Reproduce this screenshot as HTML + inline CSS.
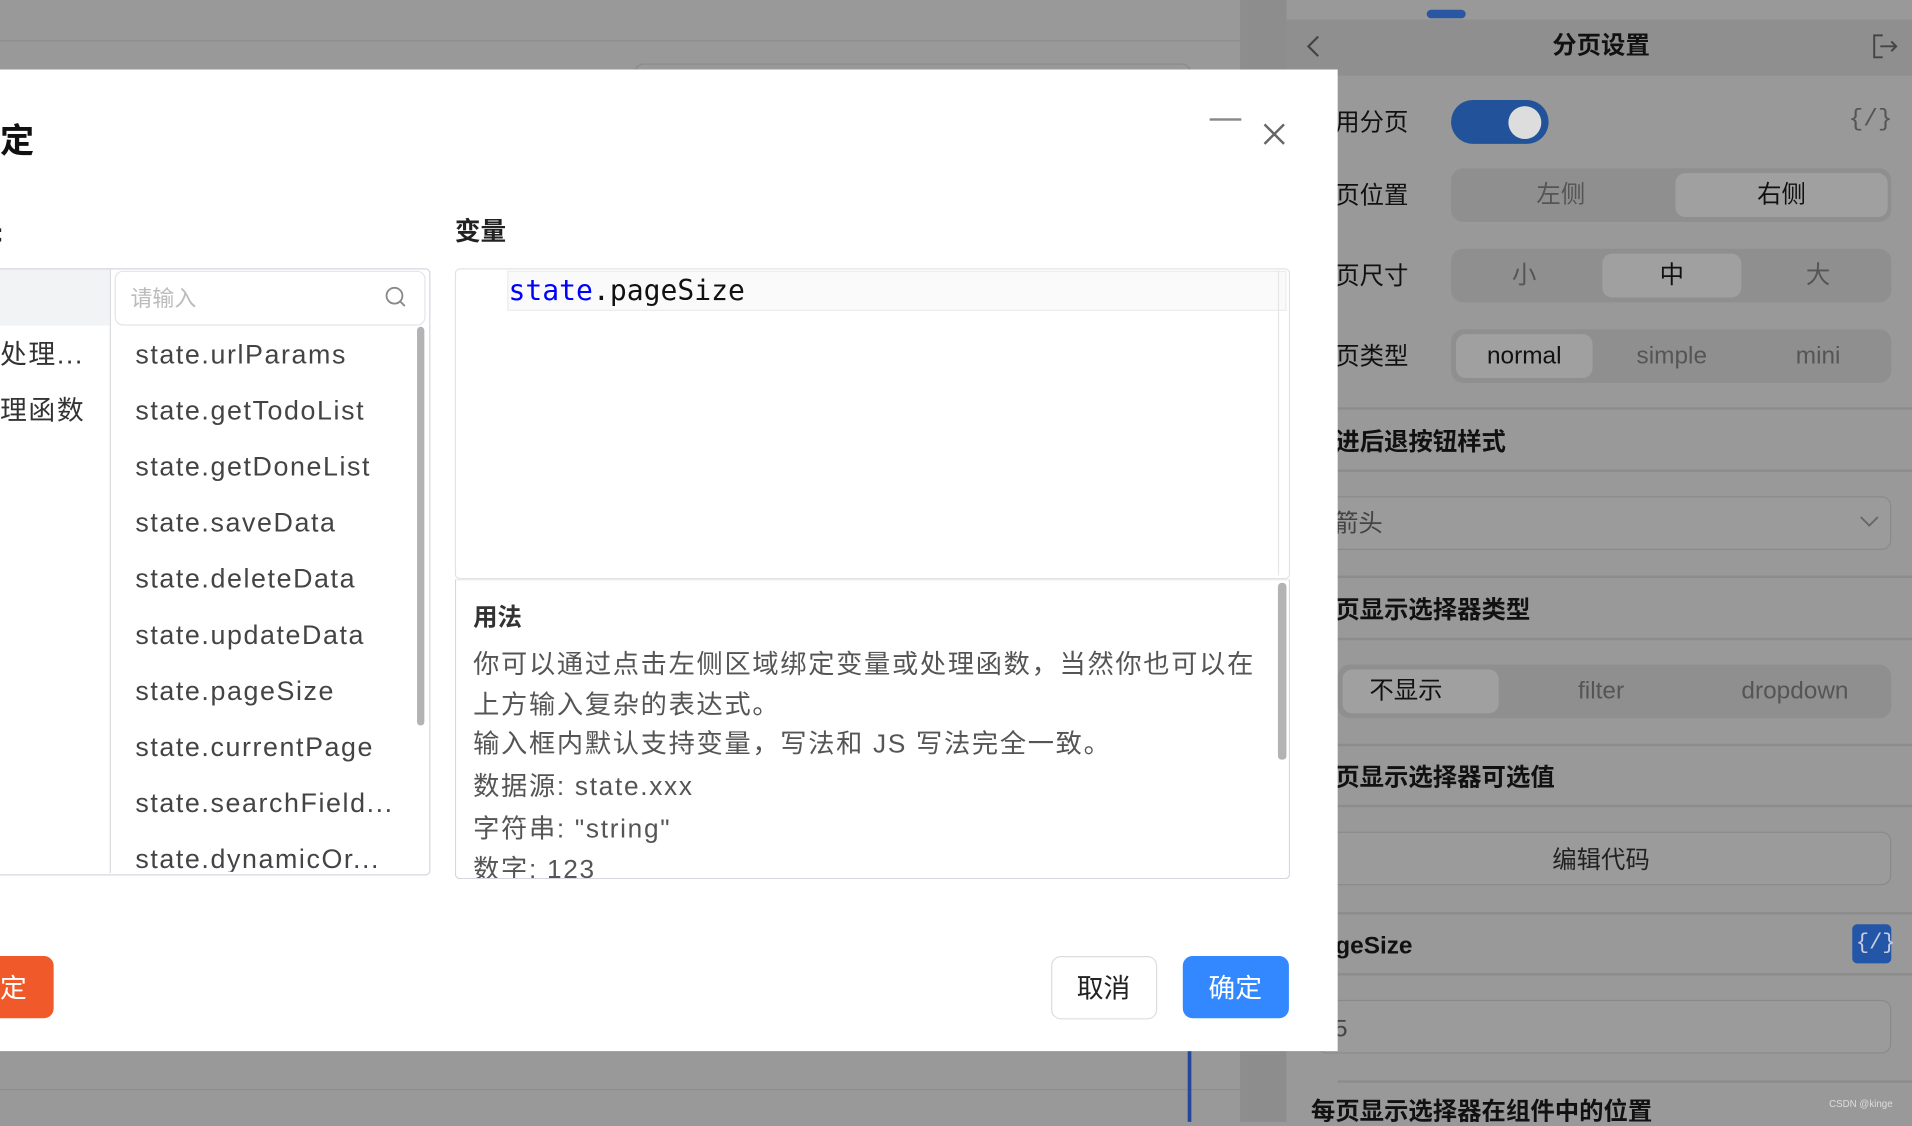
<!DOCTYPE html>
<html><head><meta charset="utf-8"><style>
html,body{margin:0;padding:0;width:1912px;height:1122px;overflow:hidden;background:#999;}
#w{position:absolute;left:0;top:0;width:1568px;height:920px;transform:scale(1.21939);transform-origin:0 0;font-family:"Liberation Sans","Noto Sans CJK SC",sans-serif;}
.a{position:absolute;}
.t{position:absolute;white-space:nowrap;line-height:1;}
.seg{position:absolute;left:1190px;width:361px;height:44px;background:#8f8f8f;border-radius:10px;}
.seg .s{position:absolute;top:4px;height:36px;background:#a0a0a0;border-radius:8px;}
.seg .t{font-size:20px;color:#555;top:12px;transform:translateX(-50%);}
.div{position:absolute;left:1097px;width:471px;height:2px;background:#8c8c8c;}
.lbl{position:absolute;left:1095px;font-size:20px;color:#111;white-space:nowrap;line-height:1;}
.box{position:absolute;left:1080px;width:469px;height:42px;border:1px solid #8a8a8a;border-radius:8px;background:#9b9b9b;}
.li{position:absolute;left:111px;font-size:22px;color:#444;white-space:nowrap;line-height:1;letter-spacing:1.3px;}
.u{position:absolute;left:388px;font-size:21.5px;color:#555;white-space:nowrap;line-height:1;letter-spacing:1.4px;}
</style></head><body><div id="w">
<div class="a" style="left:0;top:33px;width:1017px;height:1px;background:#8e8e8e"></div>
<div class="a" style="left:520px;top:52px;width:455px;height:10px;border:1px solid #8a8a8a;border-bottom:none;border-radius:8px 8px 0 0"></div>
<div class="a" style="left:1017px;top:0;width:38px;height:920px;background:#8d8d8d"></div>
<div class="a" style="left:0;top:893px;width:1017px;height:1px;background:#8e8e8e"></div>
<div class="a" style="left:974px;top:862px;width:3px;height:58px;background:#23479a"></div>
<div class="a" style="left:1055px;top:0;width:513px;height:62px;background:#8f8f8f"></div>
<div class="a" style="left:1055px;top:0;width:513px;height:16px;background:#999"></div>
<div class="a" style="left:1170px;top:8px;width:32px;height:7px;border-radius:4px;background:#2a57a3"></div>
<svg class="a" style="left:1070px;top:28px" width="16" height="20"><path d="M11 2 L3 10 L11 18" fill="none" stroke="#444" stroke-width="1.8"/></svg>
<div class="t" style="left:1313px;top:28px;font-size:20px;font-weight:bold;color:#111;transform:translateX(-50%)">分页设置</div>
<svg class="a" style="left:1535px;top:27px" width="22" height="22"><path d="M9 2 H2 V20 H9 M7 11 H20 M16 7 L20 11 L16 15" fill="none" stroke="#444" stroke-width="1.6"/></svg>
<div class="lbl" style="top:91px">用分页</div>
<div class="a" style="left:1190px;top:82px;width:80px;height:36px;border-radius:18px;background:#22539a"></div>
<div class="a" style="left:1237px;top:87px;width:27px;height:27px;border-radius:50%;background:#ddd"></div>
<div class="t" style="left:1516px;top:89px;font-size:20px;color:#555;font-family:'Liberation Mono',monospace">{/}</div>
<div class="lbl" style="top:151px">页位置</div>
<div class="seg" style="top:138px"><div class="s" style="left:184px;width:174px"></div><div class="t" style="left:90px">左侧</div><div class="t" style="left:271px;color:#111">右侧</div></div>
<div class="lbl" style="top:217px">页尺寸</div>
<div class="seg" style="top:204px"><div class="s" style="left:124px;width:114px"></div><div class="t" style="left:60px">小</div><div class="t" style="left:181px;color:#111">中</div><div class="t" style="left:301px">大</div></div>
<div class="lbl" style="top:283px">页类型</div>
<div class="seg" style="top:270px"><div class="s" style="left:4px;width:112px"></div><div class="t" style="left:60px;color:#111">normal</div><div class="t" style="left:181px">simple</div><div class="t" style="left:301px">mini</div></div>
<div class="div" style="top:334px"></div>
<div class="lbl" style="top:353px;font-weight:bold">进后退按钮样式</div>
<div class="div" style="top:385px"></div>
<div class="box" style="top:407px"></div>
<div class="t" style="left:1094px;top:420px;font-size:20px;color:#444">箭头</div>
<svg class="a" style="left:1524px;top:422px" width="18" height="12"><path d="M2 2 L9 9 L16 2" fill="none" stroke="#666" stroke-width="1.5"/></svg>
<div class="div" style="top:472px"></div>
<div class="lbl" style="top:491px;font-weight:bold">页显示选择器类型</div>
<div class="div" style="top:523px"></div>
<div class="seg" style="top:545px;left:1097px;width:454px"><div class="s" style="left:4px;width:128px"></div><div class="t" style="left:56px;color:#111">不显示</div><div class="t" style="left:216px">filter</div><div class="t" style="left:375px">dropdown</div></div>
<div class="div" style="top:610px"></div>
<div class="lbl" style="top:628px;font-weight:bold">页显示选择器可选值</div>
<div class="div" style="top:660px"></div>
<div class="box" style="top:682px"></div>
<div class="t" style="left:1313px;top:696px;font-size:20px;color:#222;transform:translateX(-50%)">编辑代码</div>
<div class="div" style="top:748px"></div>
<div class="lbl" style="top:766px;font-weight:bold">geSize</div>
<div class="a" style="left:1519px;top:758px;width:32px;height:32px;border-radius:4px;background:#2456a8"></div>
<div class="t" style="left:1522px;top:765px;font-size:18px;color:#ccd;font-family:'Liberation Mono',monospace">{/}</div>
<div class="div" style="top:798px"></div>
<div class="box" style="top:820px"></div>
<div class="t" style="left:1094px;top:834px;font-size:20px;color:#444">5</div>
<div class="div" style="top:886px"></div>
<div class="t" style="left:1075px;top:902px;font-size:20px;font-weight:bold;color:#111">每页显示选择器在组件中的位置</div>
<div class="t" style="left:1500px;top:902px;font-size:8px;color:#ddd">CSDN @kinge</div>
<div class="a" style="left:0;top:57px;width:1097px;height:805px;background:#fff"></div>
<div class="t" style="left:0;top:102px;font-size:28px;font-weight:bold;color:#111">定</div>
<div class="a" style="left:992px;top:97px;width:26px;height:2px;background:#888"></div>
<svg class="a" style="left:1035px;top:100px" width="20" height="20"><path d="M2 2 L18 18 M18 2 L2 18" stroke="#666" stroke-width="2"/></svg>
<div class="t" style="left:-4px;top:181px;font-size:21px;font-weight:bold;color:#222">:</div>
<div class="t" style="left:373px;top:180px;font-size:21px;font-weight:bold;color:#222">变量</div>
<div class="a" style="left:-4px;top:220px;width:355px;height:496px;border:1px solid #d5d7de;border-radius:4px"></div>
<div class="a" style="left:0;top:221px;width:90px;height:46px;background:#f2f3f5"></div>
<div class="a" style="left:90px;top:221px;width:1px;height:495px;background:#dcdde2"></div>
<div class="li" style="left:0;top:280px;color:#333">处理...</div>
<div class="li" style="left:0;top:326px;color:#333">理函数</div>
<div class="a" style="left:94px;top:222px;width:253px;height:43px;border:1px solid #e3e4e8;border-radius:7px"></div>
<div class="t" style="left:107px;top:236px;font-size:18px;color:#bbb">请输入</div>
<svg class="a" style="left:315px;top:234px" width="20" height="20"><circle cx="8.5" cy="8.5" r="6.5" fill="none" stroke="#888" stroke-width="1.5"/><path d="M13 13 L17 17" stroke="#888" stroke-width="1.5"/></svg>
<div class="a" style="left:342px;top:268px;width:6px;height:327px;border-radius:3px;background:#b3b3b3"></div>
<div class="a" style="left:92px;top:267px;width:248px;height:448px;overflow:hidden">
<div class="li" style="left:19px;top:13px">state.urlParams</div>
<div class="li" style="left:19px;top:59px">state.getTodoList</div>
<div class="li" style="left:19px;top:105px">state.getDoneList</div>
<div class="li" style="left:19px;top:151px">state.saveData</div>
<div class="li" style="left:19px;top:197px">state.deleteData</div>
<div class="li" style="left:19px;top:243px">state.updateData</div>
<div class="li" style="left:19px;top:289px">state.pageSize</div>
<div class="li" style="left:19px;top:335px">state.currentPage</div>
<div class="li" style="left:19px;top:381px">state.searchField...</div>
<div class="li" style="left:19px;top:427px">state.dynamicOr...</div>
</div>
<div class="a" style="left:373px;top:220px;width:683px;height:253px;border:1px solid #e2e3e6;border-radius:4px"></div>
<div class="a" style="left:416px;top:222px;width:637px;height:31px;border:1px solid #ececec;background:#fafafa"></div>
<div class="a" style="left:1048px;top:222px;width:1px;height:250px;background:#e6e6e6"></div>
<div class="t" style="left:417px;top:228px;font-size:23px;font-family:'DejaVu Sans Mono','Liberation Mono',monospace;color:#111"><span style="color:#0000ff">state</span>.pageSize</div>
<div class="a" style="left:373px;top:475px;width:683px;height:244px;border:1px solid #d5d7de;border-top-color:#e8e8e8;border-radius:0 0 4px 4px;overflow:hidden">
<div class="t" style="left:14px;top:21px;font-size:20px;font-weight:bold;color:#333">用法</div>
<div class="u" style="left:14px;top:59px">你可以通过点击左侧区域绑定变量或处理函数，当然你也可以在</div>
<div class="u" style="left:14px;top:92px">上方输入复杂的表达式。</div>
<div class="u" style="left:14px;top:124px">输入框内默认支持变量，写法和 JS 写法完全一致。</div>
<div class="u" style="left:14px;top:159px">数据源: state.xxx</div>
<div class="u" style="left:14px;top:194px">字符串: "string"</div>
<div class="u" style="left:14px;top:227px">数字: 123</div>
<div class="a" style="left:674px;top:2px;width:7px;height:145px;border-radius:3px;background:#b3b3b3"></div>
</div>
<div class="a" style="left:0;top:784px;width:44px;height:51px;background:#f05a2a;border-radius:0 8px 8px 0"></div>
<div class="t" style="left:0;top:800px;font-size:22px;color:#fff">定</div>
<div class="a" style="left:862px;top:784px;width:85px;height:50px;border:1px solid #ddd;border-radius:8px"></div>
<div class="t" style="left:905px;top:800px;font-size:22px;color:#222;transform:translateX(-50%)">取消</div>
<div class="a" style="left:970px;top:784px;width:87px;height:51px;background:#3388ff;border-radius:8px"></div>
<div class="t" style="left:1013px;top:800px;font-size:22px;color:#fff;transform:translateX(-50%)">确定</div>
</div></body></html>
